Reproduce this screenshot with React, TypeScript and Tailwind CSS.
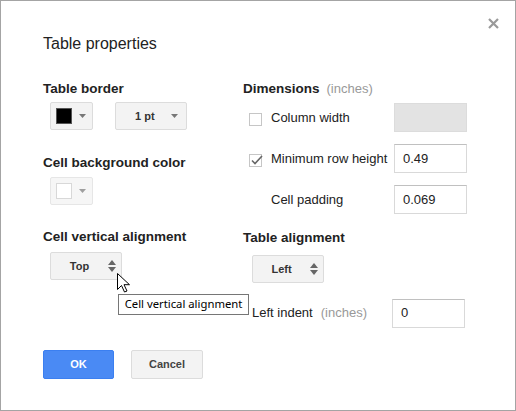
import React from 'react';

const font = { fontFamily: '"Liberation Sans", Arial, sans-serif' };

function DropArrow() {
  return (
    <svg width="7" height="4" viewBox="0 0 7 4" className="shrink-0">
      <path d="M0 0h7L3.5 4z" fill="#777" />
    </svg>
  );
}

function UpDown() {
  return (
    <svg width="8" height="12" viewBox="0 0 8 12" className="shrink-0">
      <path d="M0 5h8L4 0z" fill="#666" />
      <path d="M0 7h8L4 12z" fill="#666" />
    </svg>
  );
}

function ColorButton({ color, disabled }: { color: string; disabled?: boolean }) {
  return (
    <div
      className={`flex h-[28px] w-[43px] items-center rounded-[2px] border border-[#dcdcdc] bg-[#f3f3f3] pl-[5px] ${
        disabled ? 'opacity-70' : ''
      }`}
    >
      <div
        className="h-[16px] w-[16px] border"
        style={{ background: color, borderColor: disabled ? '#c8c8c8' : '#555' }}
      />
      <div className="ml-[7px]">
        <DropArrow />
      </div>
    </div>
  );
}

function SelectButton({ label, width }: { label: string; width: string }) {
  return (
    <div
      className={`flex h-[28px] ${width} items-center rounded-[2px] border border-[#dcdcdc] bg-[#f3f3f3] pr-[5px] text-[11px] font-bold text-[#333]`}
    >
      <span className="flex-1 text-center">{label}</span>
      <UpDown />
    </div>
  );
}

function Checkbox({ checked }: { checked?: boolean }) {
  return (
    <div className="relative mt-[4px] h-[13px] w-[13px] border border-[#c6c6c6] bg-white">
      {checked && (
        <svg width="14" height="12" viewBox="0 0 14 12" className="absolute left-[0px] top-[-1px]">
          <path d="M2 6.5l3 3L12 2" fill="none" stroke="#666" strokeWidth="1.6" />
        </svg>
      )}
    </div>
  );
}

function NumberInput({ value, disabled }: { value?: string; disabled?: boolean }) {
  return (
    <div
      className={`flex h-[29px] w-[73px] items-center border pl-[8px] text-[13px] text-[#222] ${
        disabled ? 'border-[#dcdcdc] bg-[#e3e3e3]' : 'border-[#d9d9d9] border-t-[#c0c0c0] bg-white'
      }`}
    >
      {value}
    </div>
  );
}

export default function App() {
  return (
    <div
      className="relative h-[411px] w-[516px] border border-[#a4a4a4] bg-white pl-[42px] pt-[33px] text-[#222]"
      style={font}
    >
      <svg
        width="11"
        height="11"
        viewBox="0 0 11 11"
        className="absolute right-[16px] top-[17px]"
      >
        <path d="M1 1l9 9M10 1l-9 9" stroke="#9a9a9a" strokeWidth="2.2" />
      </svg>

      <div className="h-[20px] text-[16px] leading-[20px]">Table properties</div>

      <div className="mt-[27px] grid grid-cols-[200px_1fr]">
        <div className="flex flex-col">
          <div className="h-[16px] text-[13.5px] font-bold leading-[16px]">Table border</div>
          <div className="mt-[5px] flex gap-[22px] pl-[7px]">
            <ColorButton color="#000" />
            <div className="flex h-[28px] w-[72px] items-center rounded-[2px] border border-[#dcdcdc] bg-[#f3f3f3] pl-[19px] pr-[8px] text-[11px] font-bold text-[#333]">
              <span className="flex-1">1 pt</span>
              <DropArrow />
            </div>
          </div>

          <div className="mt-[25px] h-[16px] text-[13.5px] font-bold leading-[16px]">
            Cell background color
          </div>
          <div className="mt-[6px] pl-[7px]">
            <ColorButton color="#fff" disabled />
          </div>

          <div className="mt-[24px] h-[16px] text-[13.5px] font-bold leading-[16px]">
            Cell vertical alignment
          </div>
          <div className="mt-[7px] pl-[7px]">
            <SelectButton label="Top" width="w-[72px]" />
          </div>
        </div>

        <div className="flex flex-col">
          <div className="h-[16px] text-[13px] leading-[16px]">
            <span className="text-[13.5px] font-bold">Dimensions</span>
            <span className="ml-[7px] text-[#999]">(inches)</span>
          </div>

          <div className="mt-[6px] flex h-[29px] items-center text-[13px]">
            <div className="w-[28px] pl-[6px]">
              <Checkbox />
            </div>
            <span className="w-[123px]">Column width</span>
            <NumberInput disabled />
          </div>
          <div className="mt-[12px] flex h-[29px] items-center text-[13px]">
            <div className="w-[28px] pl-[6px]">
              <Checkbox checked />
            </div>
            <span className="w-[123px]">Minimum row height</span>
            <NumberInput value="0.49" />
          </div>
          <div className="mt-[12px] flex h-[29px] items-center text-[13px]">
            <div className="w-[28px]" />
            <span className="w-[123px]">Cell padding</span>
            <NumberInput value="0.069" />
          </div>

          <div className="mt-[16px] h-[16px] text-[13.5px] font-bold leading-[16px]">
            Table alignment
          </div>
          <div className="mt-[9px] pl-[9px]">
            <SelectButton label="Left" width="w-[72px]" />
          </div>

          <div className="mt-[15px] flex h-[28px] items-center pl-[9px] pt-[2px] text-[13px]">
            <span className="w-[140px]">
              Left indent<span className="ml-[8px] text-[#999]">(inches)</span>
            </span>
            <NumberInput value="0" />
          </div>
        </div>
      </div>

      <div className="mt-[24px] flex gap-[17px]">
        <div className="flex h-[29px] w-[71px] items-center justify-center rounded-[2px] border border-[#3b7ff0] bg-[#4a8af4] text-[11px] font-bold text-white">
          OK
        </div>
        <div className="flex h-[29px] w-[72px] items-center justify-center rounded-[2px] border border-[#dcdcdc] bg-[#f3f3f3] text-[11px] font-bold text-[#444]">
          Cancel
        </div>
      </div>

      {/* hover tooltip + pointer */}
      <div
        className="absolute left-[117px] top-[293px] flex h-[21px] w-[131px] items-center justify-center border border-[#767676] bg-white text-[11.3px] text-black"
        style={{ fontFamily: '"Noto Sans", "Open Sans", sans-serif' }}
      >
        Cell vertical alignment
      </div>
      <svg
        width="13"
        height="20"
        viewBox="0 0 13 20"
        className="absolute left-[116px] top-[272px]"
      >
        <path
          d="M0.5 0.5v16l4-4 3 6.5 2.5-1-3-6.3h5.5z"
          fill="#fff"
          stroke="#000"
          strokeWidth="1"
          strokeLinejoin="round"
        />
      </svg>
    </div>
  );
}
